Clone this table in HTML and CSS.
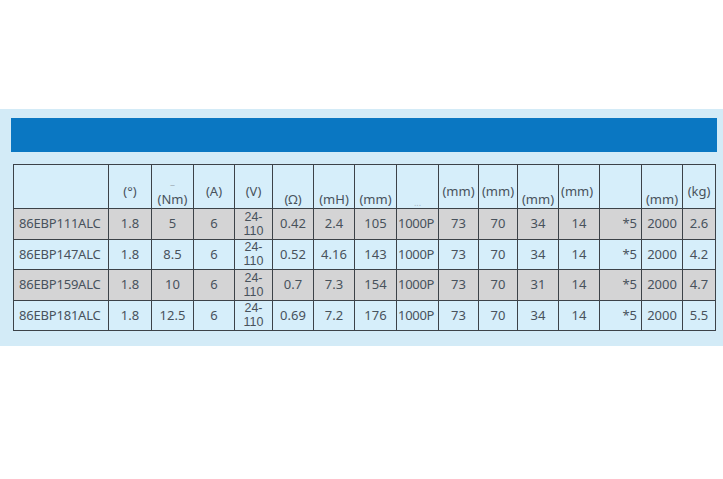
FILE: index.html
```html
<!DOCTYPE html>
<html>
<head>
<meta charset="utf-8">
<link rel="stylesheet" href="styles.css">
</head>
<body>
<div class="panel">
  <div class="bar"></div>
  <table class="spec">
    <colgroup>
      <col class="c-model"><col class="c43"><col class="c42"><col class="c41"><col class="c38"><col class="c41"><col class="c41"><col class="c42"><col class="c42"><col class="c40"><col class="c39"><col class="c41"><col class="c41"><col class="c42"><col class="c41"><col class="c33">
    </colgroup>
    <thead>
      <tr class="head">
        <th></th>
        <th class="hi">(°)</th>
        <th class="lo"><span class="ghost">–</span>(Nm)</th>
        <th class="hi">(A)</th>
        <th class="hi">(V)</th>
        <th class="lo">(Ω)</th>
        <th class="lo">(mH)</th>
        <th class="lo">(mm)</th>
        <th class="lo"><span class="ghost dots">...</span></th>
        <th class="hi">(mm)</th>
        <th class="hi">(mm)</th>
        <th class="lo">(mm)</th>
        <th class="hi left">(mm)</th>
        <th></th>
        <th class="lo">(mm)</th>
        <th class="hi">(kg)</th>
      </tr>
    </thead>
    <tbody>
      <tr class="gray">
        <td class="model">86EBP111ALC</td><td>1.8</td><td>5</td><td>6</td><td class="volt">24-<br>110</td><td>0.42</td><td>2.4</td><td>105</td><td class="left">1000P</td><td>73</td><td>70</td><td>34</td><td>14</td><td class="right">*5</td><td>2000</td><td>2.6</td>
      </tr>
      <tr class="blue">
        <td class="model">86EBP147ALC</td><td>1.8</td><td>8.5</td><td>6</td><td class="volt">24-<br>110</td><td>0.52</td><td>4.16</td><td>143</td><td class="left">1000P</td><td>73</td><td>70</td><td>34</td><td>14</td><td class="right">*5</td><td>2000</td><td>4.2</td>
      </tr>
      <tr class="gray">
        <td class="model">86EBP159ALC</td><td>1.8</td><td>10</td><td>6</td><td class="volt">24-<br>110</td><td>0.7</td><td>7.3</td><td>154</td><td class="left">1000P</td><td>73</td><td>70</td><td>31</td><td>14</td><td class="right">*5</td><td>2000</td><td>4.7</td>
      </tr>
      <tr class="blue">
        <td class="model">86EBP181ALC</td><td>1.8</td><td>12.5</td><td>6</td><td class="volt">24-<br>110</td><td>0.69</td><td>7.2</td><td>176</td><td class="left">1000P</td><td>73</td><td>70</td><td>34</td><td>14</td><td class="right">*5</td><td>2000</td><td>5.5</td>
      </tr>
    </tbody>
  </table>
</div>
</body>
</html>
```

FILE: styles.css
```css
html, body {
  margin: 0;
  padding: 0;
  background: #ffffff;
}

body {
  padding-top: 109px;
  font-family: "Noto Sans", "Liberation Sans", sans-serif;
}

.panel {
  background: #d3ebf7;
  height: 237px;
  box-sizing: border-box;
  padding: 9px 6px 0 11px;
}

.bar {
  height: 34px;
  background: #0a77c2;
}

.spec {
  margin: 12px 0 0 2px;
  border-collapse: collapse;
  table-layout: fixed;
  width: 703px;
  color: #48525c;
  font-size: 13px;
}

.c-model { width: 95px; }
.c43 { width: 43px; }
.c42 { width: 42px; }
.c41 { width: 41px; }
.c40 { width: 40px; }
.c39 { width: 39px; }
.c38 { width: 38px; }
.c33 { width: 33px; }

.spec th, .spec td {
  border: 1px solid #3c4248;
  padding: 0;
  text-align: center;
  white-space: nowrap;
  overflow: hidden;
}

.head { height: 44px; }

.spec th {
  background: #d6eefa;
  font-weight: 400;
  font-size: 13px;
  vertical-align: bottom;
  line-height: 15px;
}

.spec th.hi { padding-bottom: 9px; }
.spec th.lo { padding-bottom: 1px; }
.spec th.left { text-align: left; padding-left: 2px; }

.ghost {
  display: block;
  color: #a9b8c2;
  line-height: 8px;
  font-size: 10px;
  margin-bottom: 4px;
}

.ghost.dots {
  margin-bottom: 0;
  font-size: 9px;
}

.gray, .blue { height: 30.5px; }

.spec td {
  line-height: 15px;
  vertical-align: middle;
}

.gray td { background: #d4d4d5; }
.blue td { background: #d6eefa; }

.spec td.model {
  text-align: left;
  padding-left: 5px;
  letter-spacing: -0.2px;
}

.spec td.volt {
  font-family: "Liberation Sans", "Noto Sans", sans-serif;
  font-size: 12.5px;
  line-height: 14px;
}

.spec td.left {
  text-align: left;
  padding-left: 1px;
  letter-spacing: -0.3px;
}

.spec td.right {
  text-align: right;
  padding-right: 4px;
}
```
